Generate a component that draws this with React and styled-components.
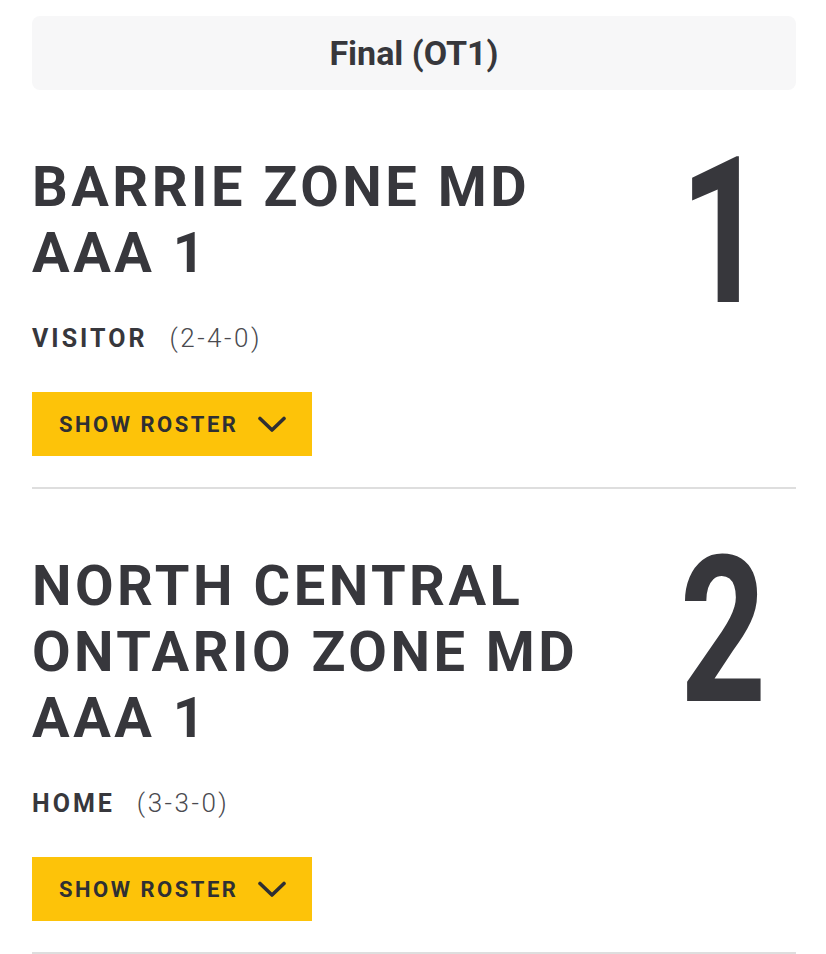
import React from 'react'
import styled, { createGlobalStyle } from 'styled-components'

const Global = createGlobalStyle`
  body {
    margin: 0;
    background: #ffffff;
    font-family: Roboto, "Liberation Sans", sans-serif;
    color: #37373c;
  }
`

const Page = styled.div`
  padding: 16px 30px 0 32px;
`

const StatusBar = styled.div`
  height: 74px;
  border-radius: 8px;
  background: #f7f7f8;
  display: flex;
  align-items: center;
  justify-content: center;
  font-size: 34px;
  font-weight: 700;
  color: #37373c;
`

const TeamSection = styled.section`
  padding: 64px 0 31px;
  border-bottom: 2px solid #dedede;
`

const TeamRow = styled.div`
  display: flex;
  align-items: flex-start;
`

const TeamInfo = styled.div`
  flex: 1;
`

const TeamName = styled.h2`
  margin: 0;
  font-size: 56px;
  line-height: 66px;
  font-weight: 700;
  letter-spacing: 3.5px;
  color: #37373c;
  max-width: 590px;
`

const Score = styled.div`
  width: 146px;
  margin-top: 4px;
  text-align: center;
  font-size: 204px;
  line-height: 150px;
  font-weight: 700;
  color: #37373c;
  transform: scaleX(0.74);
`

const Record = styled.div`
  margin-top: 36px;
  height: 32px;
  display: flex;
  align-items: baseline;
  gap: 22px;
  line-height: 32px;
`

const Side = styled.span`
  font-size: 25px;
  font-weight: 700;
  letter-spacing: 3px;
`

const Standing = styled.span`
  font-size: 26px;
  font-weight: 300;
  color: #4a4a4f;
  letter-spacing: 2.5px;
`

const RosterButton = styled.button`
  margin-top: 38px;
  height: 64px;
  width: 280px;
  padding: 0 26px 0 27px;
  border: 0;
  border-radius: 0;
  background: #fdc309;
  display: flex;
  align-items: center;
  justify-content: space-between;
  font-family: Roboto, "Liberation Sans", sans-serif;
  font-size: 22px;
  font-weight: 700;
  letter-spacing: 2.5px;
  color: #2f2f33;
  cursor: pointer;
`

const Chevron = () => (
  <svg width="28" height="17" viewBox="0 0 28 17" fill="none">
    <path d="M2 2.5 L14 14 L26 2.5" stroke="#2f2f33" strokeWidth="3.6" strokeLinecap="round" strokeLinejoin="round" />
  </svg>
)

const teams = [
  { name: 'BARRIE ZONE MD AAA 1', side: 'VISITOR', record: '(2-4-0)', score: 1 },
  { name: 'NORTH CENTRAL ONTARIO ZONE MD AAA 1', side: 'HOME', record: '(3-3-0)', score: 2 },
]

const App = () => {
  return (
    <>
      <Global />
      <Page>
        <StatusBar>Final (OT1)</StatusBar>
        {teams.map((t) => (
          <TeamSection key={t.name}>
            <TeamRow>
              <TeamInfo>
                <TeamName>{t.name}</TeamName>
                <Record>
                  <Side>{t.side}</Side>
                  <Standing>{t.record}</Standing>
                </Record>
                <RosterButton>
                  SHOW ROSTER
                  <Chevron />
                </RosterButton>
              </TeamInfo>
              <Score>{t.score}</Score>
            </TeamRow>
          </TeamSection>
        ))}
      </Page>
    </>
  )
}

export default App
